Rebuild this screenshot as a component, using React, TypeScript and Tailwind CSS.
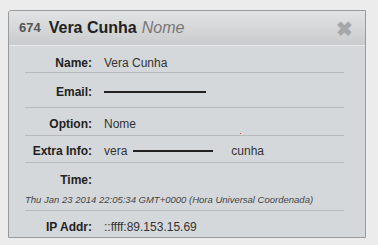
import React from 'react'

const rows = [
  { label: 'Name:', h: 'h-[22px] pt-[3px]', value: <span>Vera Cunha</span> },
  { label: 'Email:', h: 'h-[35px] pt-[4px]', value: <span className="block w-[102px] h-[2px] bg-[#222]" /> },
  { label: 'Option:', h: 'h-[28px] pt-[5px]', value: <span>Nome</span> },
  {
    label: 'Extra Info:',
    h: 'h-[27px] pt-[4px]',
    value: (
      <span className="flex items-center">
        vera
        <span className="block w-[80px] h-[2px] bg-[#222] mx-[6px]" />
        <span className="ml-[12px]">cunha</span>
      </span>
    ),
  },
]

export default function App() {
  return (
    <div className="w-[378px] h-[245px] bg-[#ececec] pt-[10px] pl-[8px] font-['Liberation_Sans',Arial,sans-serif]">
      <div className="w-[358px] h-[228px] border border-[#9a9a9a] rounded-tl-[3px] bg-[#d5d8db] flex flex-col overflow-hidden">
        {/* header */}
        <div className="h-[35px] shrink-0 flex items-center px-[10px] bg-gradient-to-b from-[#e2e3e4] to-[#c9cbcd] border-b border-[#e8e9ea] relative">
          <span className="text-[13px] font-bold text-[#555]">674</span>
          <span className="ml-[8px] text-[16px] font-bold text-[#222]">Vera Cunha</span>
          <span className="ml-[5px] text-[16px] italic text-[#777]">Nome</span>
          <span className="absolute right-[12px] top-[8px] text-[20px] font-black leading-none text-[#a5a7a9]">✖</span>
        </div>

        {/* body */}
        <div className="ml-[16px] mr-[21px] pt-[5px] text-[12px] text-[#333] relative">
          {rows.map((r) => (
            <div key={r.label} className={`${r.h} flex items-center border-b border-[#b8babc]`}>
              <span className="w-[67px] text-right font-bold text-[#222]">{r.label}</span>
              <span className="ml-[12px] flex items-center">{r.value}</span>
            </div>
          ))}
          <span className="absolute left-[215px] top-[87px] w-[1px] h-[1px] bg-[#e04040]" />
          <div className="border-b border-[#b8babc]">
            <div className="h-[31px] pt-[3px] flex items-center">
              <span className="w-[67px] text-right font-bold text-[#222]">Time:</span>
            </div>
            <div className="h-[16px] text-[9.5px] italic text-[#444] leading-[12px]">
              Thu Jan 23 2014 22:05:34 GMT+0000 (Hora Universal Coordenada)
            </div>
          </div>
          <div className="h-[29px] pt-[2px] flex items-center">
            <span className="w-[67px] text-right font-bold text-[#222]">IP Addr:</span>
            <span className="ml-[12px]">::ffff:89.153.15.69</span>
          </div>
        </div>
      </div>
    </div>
  )
}
